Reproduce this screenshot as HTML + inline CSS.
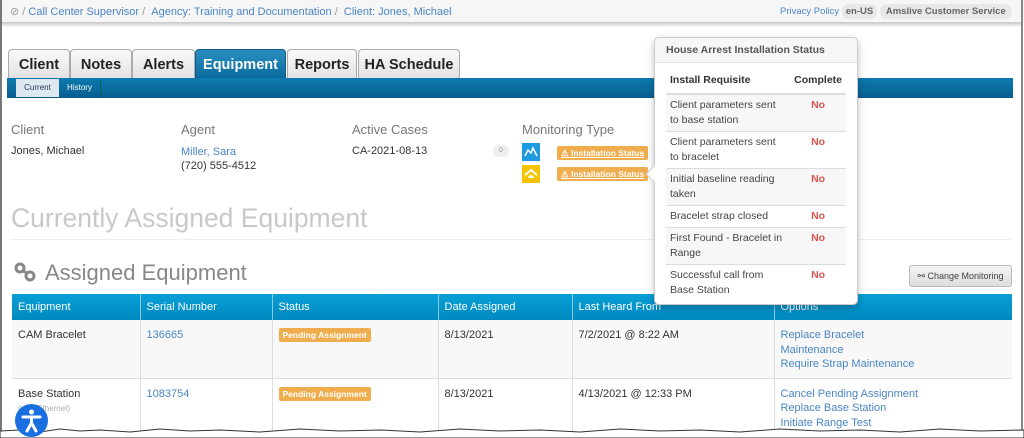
<!DOCTYPE html>
<html><head><style>
*{box-sizing:border-box;margin:0;padding:0}
html,body{width:1024px;height:438px;overflow:hidden}
body{background:#fff;font-family:"Liberation Sans",Arial,sans-serif;font-size:11px;color:#333;position:relative}
.a{position:absolute}
a,.lnk{color:#4a86c5;text-decoration:none}
.top{left:0;top:0;width:1022px;height:23px;background:#f6f6f6;border-bottom:1px solid #ccc;box-shadow:0 2px 3px rgba(0,0,0,.2)}
.frame{left:0;top:0;width:2px;height:438px;background:#777}
.tab{top:49px;height:29px;border:1px solid #aaa;border-bottom:none;border-radius:4px 4px 0 0;background:linear-gradient(#fafafa,#e2e2e2);font-size:14.5px;font-weight:bold;color:#222;text-align:center;line-height:31px;white-space:nowrap;overflow:hidden}
.tab.on{background:linear-gradient(#2a8fc0,#0a6a9e);color:#fff;border-color:#0d5c86}
.sub{left:7px;top:78px;width:1006px;height:20px;background:linear-gradient(#0d7ab0,#075e8e)}
.lbl{top:122px;font-size:13px;color:#777}
.val{font-size:11px;color:#333}
th,td{text-align:left;vertical-align:top}
.eq th{color:#fff;font-weight:normal;font-size:11px;padding:0 6px;height:26px;vertical-align:middle;border-right:1px solid #8cc8e4}
.eq td{padding:8px 6px 0;border-right:1px solid #ddd;line-height:14.5px}
.badge{background:#f0ad4e;color:#fff;font-size:8.5px;font-weight:bold;padding:2px 4px;border-radius:2px;display:inline-block;line-height:10px}
.pop{left:654px;top:37px;width:204px;height:268px;background:#fff;border:1px solid #ccc;border-radius:5px;box-shadow:0 3px 8px rgba(0,0,0,.25)}
.pop table{border-collapse:collapse;width:180px;margin-left:11px}
.pop td{padding:3px 4px;font-size:10.5px;line-height:15px;color:#444;border-top:1px solid #ddd}
.pop td.no{color:#d9534f;font-weight:bold;text-align:center;width:54px}
.pop tr:nth-child(even) td{background:#f7f7f7}
</style></head><body>
<div class="a top"></div>
<div class="a" style="left:10px;top:5px;font-size:11px;color:#999">⊘ / <span class="lnk">Call Center Supervisor</span> / &nbsp;<span class="lnk">Agency: Training and Documentation</span> / &nbsp;<span class="lnk">Client: Jones, Michael</span></div>
<div class="a" style="left:780px;top:4px;font-size:9.5px"><span class="lnk" style="vertical-align:middle">Privacy Policy</span>
<span style="display:inline-block;background:#e8e8e8;border-radius:7px;padding:2px 4px;color:#666;font-weight:bold">en-US</span>
<span style="display:inline-block;background:#e8e8e8;border-radius:7px;padding:2px 6px;color:#666;font-weight:bold">Amslive Customer Service</span></div>
<div class="a frame"></div>
<div class="a" style="left:1021px;top:0;width:2px;height:438px;background:#888"></div>

<div class="a tab" style="left:8px;width:62px">Client</div>
<div class="a tab" style="left:70px;width:62px">Notes</div>
<div class="a tab" style="left:132px;width:63px">Alerts</div>
<div class="a tab on" style="left:195px;width:91px">Equipment</div>
<div class="a tab" style="left:287px;width:70px">Reports</div>
<div class="a tab" style="left:358px;width:102px">HA Schedule</div>
<div class="a sub"></div>
<div class="a" style="left:16px;top:79px;width:43px;height:18px;background:#dde8f0;font-size:8px;color:#335;text-align:center;line-height:18px">Current</div>
<div class="a" style="left:59px;top:79px;width:42px;height:18px;font-size:8px;color:#fff;text-align:center;line-height:18px;border-right:1px solid #065">History</div>

<div class="a lbl" style="left:11px">Client</div>
<div class="a val" style="left:11px;top:145px">Jones, Michael</div>
<div class="a lbl" style="left:181px">Agent</div>
<div class="a val" style="left:181px;top:145px;line-height:14px"><span class="lnk">Miller, Sara</span><br>(720) 555-4512</div>
<div class="a lbl" style="left:352px">Active Cases</div>
<div class="a val" style="left:352px;top:145px">CA-2021-08-13</div>
<div class="a" style="left:493px;top:145px;width:16px;height:12px;background:#eee;border-radius:6px;font-size:7px;color:#999;text-align:center;line-height:12px">0</div>
<div class="a lbl" style="left:522px">Monitoring Type</div>
<svg class="a" style="left:522px;top:143px" width="18" height="18"><rect width="18" height="18" fill="#1e9be0"/><path d="M3 13 L6 7 L9 10 L11 5 L15 13" fill="none" stroke="#fff" stroke-width="1.5"/></svg>
<svg class="a" style="left:522px;top:165px" width="18" height="18"><rect width="18" height="18" fill="#f5c400"/><path d="M3 10 L9 5 L15 10" fill="none" stroke="#fff" stroke-width="2"/><path d="M6 13 A3 3 0 0 1 12 13Z" fill="#fff"/></svg>
<div class="a badge" style="left:557px;top:146px;padding:2px 4px;text-decoration:underline">⚠ Installation Status</div>
<div class="a badge" style="left:557px;top:167px;padding:2px 4px;text-decoration:underline">⚠ Installation Status</div>

<div class="a" style="left:11px;top:203px;font-size:26.5px;color:#c8c8c8">Currently Assigned Equipment</div>
<div class="a" style="left:11px;top:239px;width:1000px;height:1px;background:#eee"></div>
<svg class="a" style="left:14px;top:262px" width="24" height="20"><g fill="none" stroke="#888" stroke-width="3"><circle cx="6" cy="6" r="4"/><circle cx="16" cy="14" r="4"/><path d="M9 9 L13 11"/></g></svg>
<div class="a" style="left:45px;top:260px;font-size:22px;color:#888">Assigned Equipment</div>
<div class="a" style="left:909px;top:265px;width:103px;height:22px;border:1px solid #bbb;border-radius:3px;background:linear-gradient(#f4f4f4,#ddd);font-size:9px;color:#444;text-align:center;line-height:20px">⚯ Change Monitoring</div>

<div class="a" style="left:12px;top:294px;width:1000px;height:144px;overflow:hidden">
<table class="eq" style="width:1000px;border-collapse:collapse">
<tr style="background:linear-gradient(#08a0d6,#0088bf)"><th style="width:128px">Equipment</th><th style="width:132px">Serial Number</th><th style="width:166px">Status</th><th style="width:134px">Date Assigned</th><th style="width:202px">Last Heard From</th><th style="border:none">Options</th></tr>
<tr style="background:#f8f8f8;height:58px;border-bottom:1px solid #ddd"><td>CAM Bracelet</td><td><span class="lnk">136665</span></td><td><span class="badge">Pending Assignment</span></td><td>8/13/2021</td><td>7/2/2021 @ 8:22 AM</td><td style="border:none"><span class="lnk">Replace Bracelet<br>Maintenance<br>Require Strap Maintenance</span></td></tr>
<tr style="height:70px"><td>Base Station<br><span style="color:#aaa;font-size:8px">(with Ethernet)</span></td><td><span class="lnk">1083754</span></td><td><span class="badge">Pending Assignment</span></td><td>8/13/2021</td><td>4/13/2021 @ 12:33 PM</td><td style="border:none"><span class="lnk">Cancel Pending Assignment<br>Replace Base Station<br>Initiate Range Test</span></td></tr>
</table></div>

<div class="a pop">
<div style="height:25px;background:#f7f7f7;border-bottom:1px solid #e5e5e5;border-radius:5px 5px 0 0;font-weight:bold;font-size:10.5px;color:#555;padding:6px 0 0 11px">House Arrest Installation Status</div>
<table style="margin-top:5px">
<tr><td style="border:none;font-weight:bold;color:#333;border-bottom:2px solid #ddd;padding:5px 4px">Install Requisite</td><td style="border:none;font-weight:bold;color:#333;border-bottom:2px solid #ddd;text-align:center;padding:5px 4px">Complete</td></tr>
<tr><td>Client parameters sent to base station</td><td class="no">No</td></tr>
<tr><td>Client parameters sent to bracelet</td><td class="no">No</td></tr>
<tr><td>Initial baseline reading taken</td><td class="no">No</td></tr>
<tr><td>Bracelet strap closed</td><td class="no">No</td></tr>
<tr><td>First Found - Bracelet in Range</td><td class="no">No</td></tr>
<tr><td>Successful call from Base Station</td><td class="no">No</td></tr>
</table>
</div>
<div class="a" style="left:648px;top:168px;width:12px;height:12px;background:#fff;border-left:1px solid #ccc;border-bottom:1px solid #ccc;transform:rotate(45deg)"></div>

<svg class="a" style="left:0;top:424px" width="1024" height="14"><path d="M0 7 L20 6 L40 8 L60 5 L80 7 L100 6 L130 8 L160 5 L190 7 L220 6 L260 8 L300 5 L340 7 L380 6 L420 8 L460 5 L500 7 L540 6 L580 8 L620 5 L660 7 L700 6 L740 8 L780 5 L820 7 L860 6 L900 8 L940 5 L980 7 L1024 6 L1024 14 L0 14Z" fill="#fff" stroke="#333" stroke-width="1"/></svg>
<svg class="a" style="left:15px;top:404px" width="33" height="33"><circle cx="16.5" cy="16.5" r="16.5" fill="#1a6fe0"/><g fill="none" stroke="#fff" stroke-width="3" stroke-linecap="round"><path d="M8 13 L25 13"/><path d="M16.5 13 L16.5 19 L12 27"/><path d="M16.5 19 L21 27"/></g><circle cx="16.5" cy="8" r="2.5" fill="#fff"/></svg>
</body></html>
